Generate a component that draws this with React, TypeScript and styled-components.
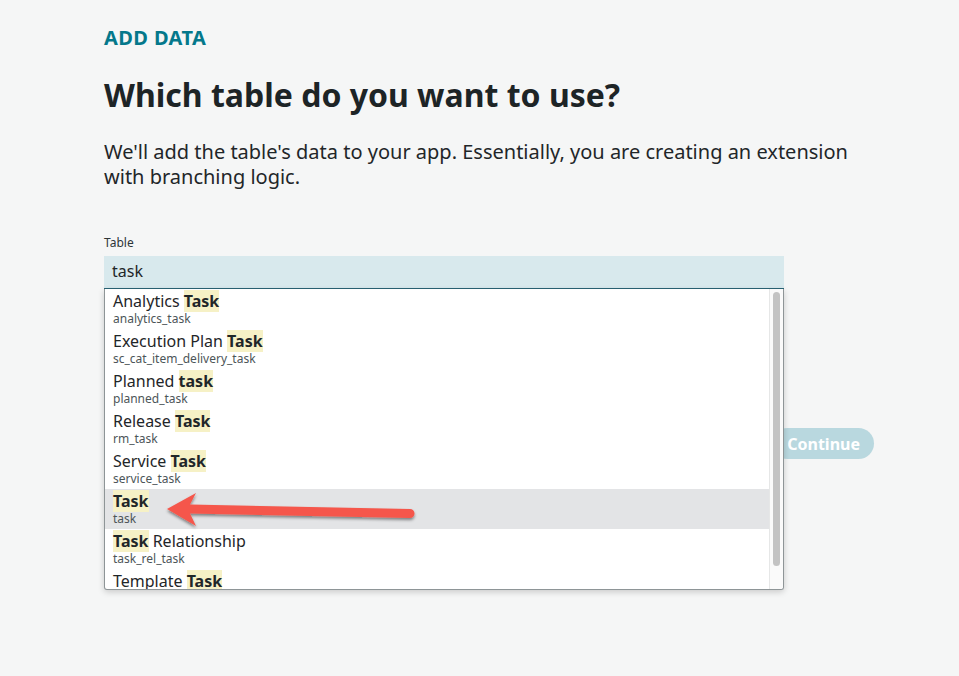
import React from "react";
import styled, { createGlobalStyle } from "styled-components";

const Global = createGlobalStyle`
  html, body { margin: 0; padding: 0; background: #f5f6f6; }
  body { font-family: "Noto Sans", "Open Sans", sans-serif; color: #1f2629; }
`;

const Page = styled.div`
  padding: 25px 0 0 104px;
  width: 770px;
  height: 650px;
`;

const Eyebrow = styled.div`
  font-size: 20px;
  line-height: 26px;
  font-weight: 700;
  color: #04788b;
  letter-spacing: 0.4px;
`;

const Title = styled.h1`
  margin: 24px 0 0;
  font-size: 32px;
  line-height: 40px;
  font-weight: 700;
  color: #1d2426;
`;

const Lead = styled.p`
  margin: 24px 0 0;
  font-size: 20px;
  line-height: 25px;
  color: #1f2629;
  width: 760px;
`;

const Label = styled.label`
  display: block;
  margin-top: 46px;
  font-size: 12px;
  line-height: 16px;
  color: #2d3538;
`;

const Field = styled.div`
  position: relative;
  margin-top: 5px;
  width: 680px;
`;

const Input = styled.div`
  height: 33px;
  box-sizing: border-box;
  background: #d8e9ed;
  border-bottom: 1px solid #2a6476;
  padding: 0 8px;
  font-size: 16px;
  line-height: 31px;
  color: #1f2629;
`;

const Dropdown = styled.div`
  position: absolute;
  top: 33px;
  left: 0;
  width: 680px;
  height: 301px;
  box-sizing: border-box;
  background: #fff;
  border: 1px solid #8e9597;
  border-top: none;
  border-radius: 0 0 3px 3px;
  box-shadow: 0 2px 6px rgba(0, 0, 0, 0.18);
  display: flex;
  overflow: hidden;
  z-index: 2;
`;

const List = styled.div`
  flex: 1;
  overflow: hidden;
`;

const Item = styled.div<{ $active?: boolean }>`
  height: 40px;
  box-sizing: border-box;
  padding: 2px 8px 0;
  background: ${(p) => (p.$active ? "#e3e4e6" : "transparent")};
`;

const ItemTitle = styled.div`
  font-size: 16px;
  line-height: 20px;
  color: #1f2629;
`;

const ItemSub = styled.div`
  font-size: 12px;
  line-height: 15px;
  color: #4c5558;
`;

const Mark = styled.span`
  background: #f6f1c6;
  font-weight: 700;
`;

const Track = styled.div`
  width: 14px;
  background: #fafafa;
  border-left: 1px solid #e6e7e7;
  padding: 3px 3px 0 3px;
  box-sizing: border-box;
`;

const Thumb = styled.div`
  width: 7px;
  height: 274px;
  border-radius: 4px;
  background: #c3c3c3;
`;

const ArrowSvg = styled.svg`
  position: absolute;
  left: 46px;
  top: 196px;
  overflow: visible;
  pointer-events: none;
`;

const Footer = styled.div`
  display: flex;
  justify-content: flex-end;
  margin-top: 139px;
`;

const Button = styled.button`
  height: 31px;
  padding: 0 14px 0 15px;
  border: none;
  border-radius: 16px;
  background: #b9d8df;
  color: #fff;
  font-family: "Noto Sans", "Open Sans", sans-serif;
  font-size: 16px;
  font-weight: 700;
`;

const items: { pre: string; match: string; post: string; sub: string }[] = [
  { pre: "Analytics ", match: "Task", post: "", sub: "analytics_task" },
  { pre: "Execution Plan ", match: "Task", post: "", sub: "sc_cat_item_delivery_task" },
  { pre: "Planned ", match: "task", post: "", sub: "planned_task" },
  { pre: "Release ", match: "Task", post: "", sub: "rm_task" },
  { pre: "Service ", match: "Task", post: "", sub: "service_task" },
  { pre: "", match: "Task", post: "", sub: "task" },
  { pre: "", match: "Task", post: " Relationship", sub: "task_rel_task" },
  { pre: "Template ", match: "Task", post: "", sub: "template_task" },
];

export default function App() {
  return (
    <>
      <Global />
      <Page>
        <Eyebrow>ADD DATA</Eyebrow>
        <Title>Which table do you want to use?</Title>
        <Lead>
          We'll add the table's data to your app. Essentially, you are creating an extension
          with branching logic.
        </Lead>
        <Label>Table</Label>
        <Field>
          <Input>task</Input>
          <Dropdown>
            <List>
              {items.map((it) => (
                <Item key={it.sub} $active={it.sub === "task"}>
                  <ItemTitle>
                    {it.pre}
                    <Mark>{it.match}</Mark>
                    {it.post}
                  </ItemTitle>
                  <ItemSub>{it.sub}</ItemSub>
                </Item>
              ))}
            </List>
            <Track>
              <Thumb />
            </Track>
            <ArrowSvg width="280" height="50" viewBox="150 485 280 50">
              <defs>
                <filter id="sh" x="-10%" y="-50%" width="120%" height="200%">
                  <feDropShadow dx="0" dy="2" stdDeviation="1.6" floodColor="#000" floodOpacity="0.45" />
                </filter>
              </defs>
              <path
                d="M166 509 L195 493 L189 504.5 L409 509 A4.5 4.5 0 0 1 409 518 L189 513.5 L195 526 Z"
                fill="#f5574b"
                filter="url(#sh)"
              />
            </ArrowSvg>
          </Dropdown>
        </Field>
        <Footer>
          <Button>Continue</Button>
        </Footer>
      </Page>
    </>
  );
}
